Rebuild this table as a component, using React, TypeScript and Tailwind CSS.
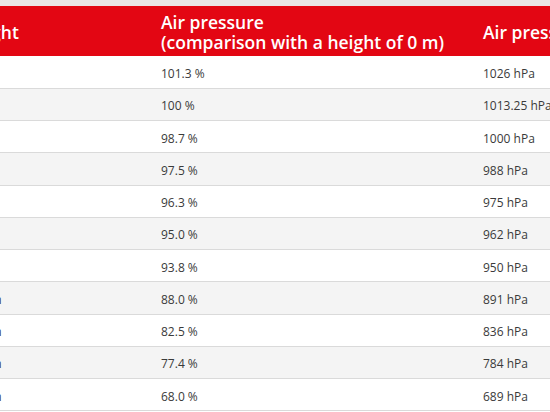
import React from "react";

const rows: [string, string, string][] = [
  ["-100 m", "101.3 %", "1026 hPa"],
  ["0 m", "100 %", "1013.25 hPa"],
  ["100 m", "98.7 %", "1000 hPa"],
  ["200 m", "97.5 %", "988 hPa"],
  ["300 m", "96.3 %", "975 hPa"],
  ["400 m", "95.0 %", "962 hPa"],
  ["500 m", "93.8 %", "950 hPa"],
  ["1000 m", "88.0 %", "891 hPa"],
  ["1500 m", "82.5 %", "836 hPa"],
  ["2000 m", "77.4 %", "784 hPa"],
  ["3000 m", "68.0 %", "689 hPa"],
];

export default function App() {
  return (
    <div
      className="w-[550px] h-[412px] overflow-hidden bg-white"
      style={{ fontFamily: '"Open Sans", "Noto Sans", sans-serif' }}
    >
      <div className="h-[6px] bg-[#ebe5e6]" />
      <table className="ml-[-50px] w-[820px] table-fixed border-collapse">
        <colgroup>
          <col className="w-[201px]" />
          <col className="w-[322px]" />
          <col className="w-[297px]" />
        </colgroup>
        <thead>
          <tr className="h-[50px] bg-[#e30613] text-white text-[17.5px] leading-[20px] text-left align-middle">
            <th className="pl-[13px] pr-[10px] pt-[1px] font-semibold">Height</th>
            <th className="px-[10px] pt-[1px] font-semibold">
              Air pressure
              <br />
              (comparison with a height of 0 m)
            </th>
            <th className="px-[10px] pt-[1px] font-semibold whitespace-nowrap">Air pressure</th>
          </tr>
        </thead>
        <tbody className="text-[12px] leading-[16px] text-[#3a3a3a]">
          {rows.map((r, i) => (
            <tr
              key={i}
              className={`h-[32.25px] border-b border-[#dadada] ${i % 2 === 1 ? "bg-[#f4f4f4]" : "bg-white"}`}
            >
              <td className="px-[10px] pt-[4px] pb-0">{r[0]}</td>
              <td className="px-[10px] pt-[4px] pb-0">{r[1]}</td>
              <td className="px-[10px] pt-[4px] pb-0 whitespace-nowrap">{r[2]}</td>
            </tr>
          ))}
        </tbody>
      </table>
    </div>
  );
}
